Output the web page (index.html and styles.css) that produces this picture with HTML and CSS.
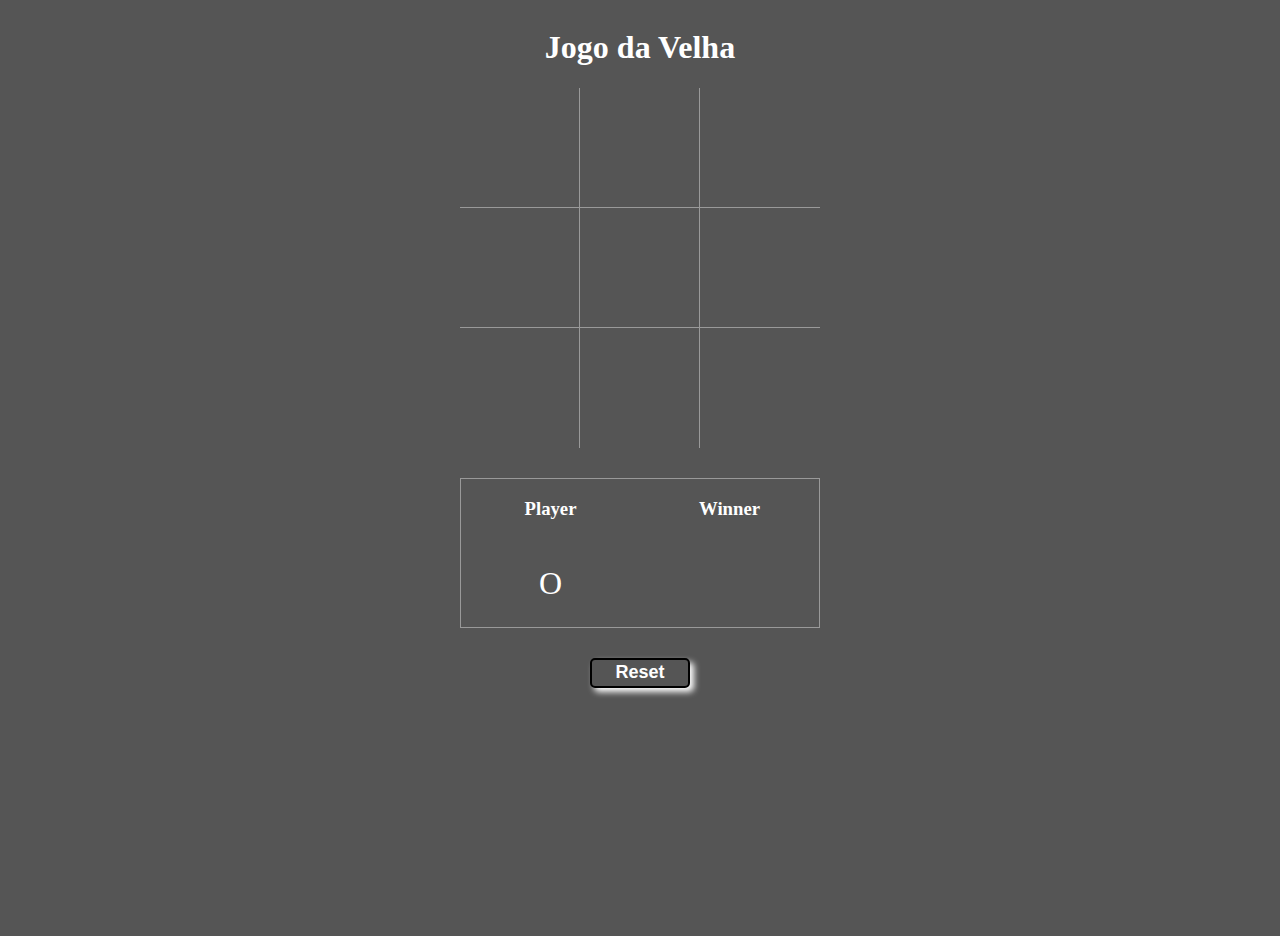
FILE: index.html
```html
<!DOCTYPE html>
<html lang="pt">
<head>
<meta charset="utf-8">
<title>Jogo da Velha</title>
<link rel="stylesheet" href="styles.css">
</head>
<body>
<h1 class="title">Jogo da Velha</h1>
<div class="board">
  <div class="cell"></div><div class="cell"></div><div class="cell last-col"></div>
  <div class="cell"></div><div class="cell"></div><div class="cell last-col"></div>
  <div class="cell last-row"></div><div class="cell last-row"></div><div class="cell last-row last-col"></div>
</div>
<div class="info">
  <div class="col">
    <h3 class="label">Player</h3>
    <div class="value">O</div>
  </div>
  <div class="col">
    <h3 class="label">Winner</h3>
    <div class="value"></div>
  </div>
</div>
<div class="actions">
  <button class="reset">Reset</button>
</div>
</body>
</html>
```
FILE: styles.css
```css
html, body {
  background: #555555;
}
body {
  margin: 8px;
  font-family: "Liberation Serif", "Times New Roman", serif;
  color: #ffffff;
}
.title {
  text-align: center;
  font-size: 32px;
  font-weight: bold;
  margin: 21.44px 0;
  line-height: 37px;
}
.board {
  width: 360px;
  height: 360px;
  margin: 0 auto;
  display: grid;
  grid-template-columns: repeat(3, 120px);
  grid-template-rows: repeat(3, 120px);
}
.cell {
  box-sizing: border-box;
  border-right: 1px solid #999999;
  border-bottom: 1px solid #999999;
}
.cell.last-col {
  border-right: none;
}
.cell.last-row {
  border-bottom: none;
}
.info {
  box-sizing: border-box;
  width: 360px;
  height: 150px;
  margin: 30px auto 0;
  border: 1px solid #999999;
  display: flex;
}
.col {
  flex: 1;
  text-align: center;
}
.label {
  font-size: 18.72px;
  line-height: 21px;
  margin: 19px 0 0;
  font-weight: bold;
}
.value {
  font-size: 32px;
  line-height: 37px;
  margin-top: 46px;
}
.actions {
  text-align: center;
  margin-top: 30px;
  padding-bottom: 20px;
}
.reset {
  width: 100px;
  height: 30px;
  box-sizing: border-box;
  border: 2px solid #000000;
  border-radius: 5px;
  background: #555555;
  color: #ffffff;
  font-family: "Liberation Sans", Arial, sans-serif;
  font-weight: bold;
  font-size: 18px;
  line-height: 24px;
  padding: 0 0 2px;
  box-shadow: 4px 4px 6px #ffffff;
  cursor: pointer;
}
```
